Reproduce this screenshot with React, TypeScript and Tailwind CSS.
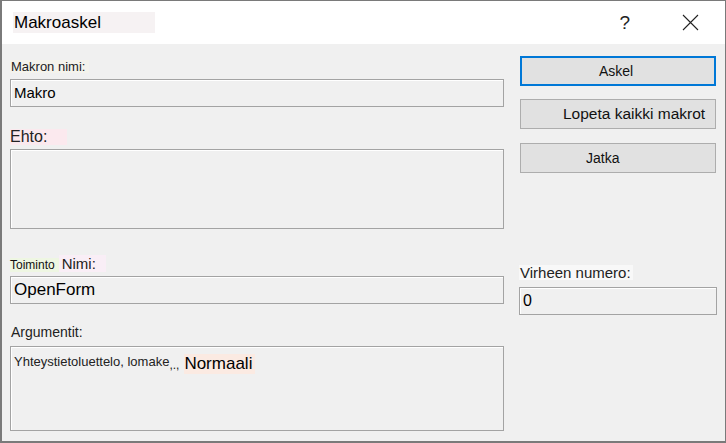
import React from "react";

const font = "font-['Liberation_Sans',Arial,sans-serif]";

const Field: React.FC<{ className?: string; children?: React.ReactNode }> = ({ className, children }) => (
  <div className={`border border-[#a3a3a3] bg-[#f0f0f0] shadow-[inset_1px_1px_0_#ffffff] ${className ?? ""}`}>{children}</div>
);

const Button: React.FC<{ className?: string; children: React.ReactNode }> = ({ className, children }) => (
  <div className={`flex h-[30px] items-center bg-[#e1e1e1] text-[#111] ${className ?? ""}`}>{children}</div>
);

export default function App() {
  return (
    <div className={`h-[443px] w-[726px] overflow-hidden border border-[#7a7a7a] border-l-[2px] border-b-[2px] bg-[#f0f0f0] ${font} text-black`}>
      {/* title bar */}
      <div className="flex h-[43px] items-center bg-white pl-[11px]">
        <span className="flex h-[21px] w-[142px] items-center bg-[#f6f2f3] pl-[1px] text-[17px] leading-none">Makroaskel</span>
        <span className="ml-auto mr-[52px] text-[19px] font-light leading-none text-[#222]">?</span>
        <svg width="17" height="17" viewBox="0 0 17 17" className="mr-[26px]">
          <path d="M1 1 L16 16 M16 1 L1 16" stroke="#222" strokeWidth="1.1" fill="none" />
        </svg>
      </div>

      <div className="flex pl-[8px]">
        {/* left column */}
        <div className="flex w-[494px] flex-col">
          <div className="mt-[14px] flex h-[16px] items-center">
            <span className="bg-[#f4f3ec] pl-[1px] pr-[4px] text-[13px] leading-none text-[#222]">Makron nimi:</span>
          </div>
          <Field className="mt-[5px] flex h-[28px] items-center pl-[3px] text-[15px]">Makro</Field>

          <div className="mt-[20px] flex h-[20px] items-center">
            <span className="bg-[#fbe9ee] pr-[20px] text-[16px] leading-none text-[#222]">Ehto:</span>
          </div>
          <Field className="mt-[2px] h-[80px]" />

          <div className="mt-[25px] flex h-[18px] items-end">
            <span className="bg-[#eef6e2] pr-[4px] text-[12px] leading-[14px] text-[#111]">Toiminto</span>
            <span className="bg-[#f9eef6] pl-[3px] pr-[10px] text-[15px] leading-[17px] text-[#222]">Nimi:</span>
          </div>
          <Field className="mt-[4px] flex h-[28px] items-center pl-[3px] text-[17px]">OpenForm</Field>

          <div className="mt-[20px] flex h-[16px] items-center">
            <span className="pl-[1px] text-[14px] leading-none text-[#222]">Argumentit:</span>
          </div>
          <Field className="mt-[6px] flex h-[85px] items-start pl-[3px] pt-[7px]">
            <span className="text-[13px] leading-[16px] text-[#222]">Yhteystietoluettelo, lomake</span>
            <span className="mt-[3px] text-[12px] leading-[16px] text-[#222]">,.,</span>
            <span className="ml-[5px] bg-[#fbeae2] pr-[3px] text-[17px] leading-[20px]">Normaali</span>
          </Field>
        </div>

        {/* right column */}
        <div className="ml-[15px] flex w-[198px] flex-col">
          <Button className="ml-[1px] mt-[12px] w-[196px] justify-center border-2 border-[#0078d7] text-[14px]">
            <span className="pr-[4px]">Askel</span>
          </Button>
          <Button className="ml-[1px] mt-[13px] w-[196px] border border-[#adadad] pl-[42px] text-[15.5px]">
            Lopeta kaikki makrot
          </Button>
          <Button className="ml-[1px] mt-[14px] w-[196px] border border-[#adadad] pl-[65px] text-[14px]">
            Jatka
          </Button>

          <div className="mt-[91px] flex h-[17px] items-center">
            <span className="bg-[#f8f8f8] pl-[1px] pr-[2px] text-[15px] leading-none text-[#222]">Virheen numero:</span>
          </div>
          <Field className="mt-[6px] flex h-[28px] items-center pl-[3px] text-[16px]">0</Field>
        </div>
      </div>
    </div>
  );
}
